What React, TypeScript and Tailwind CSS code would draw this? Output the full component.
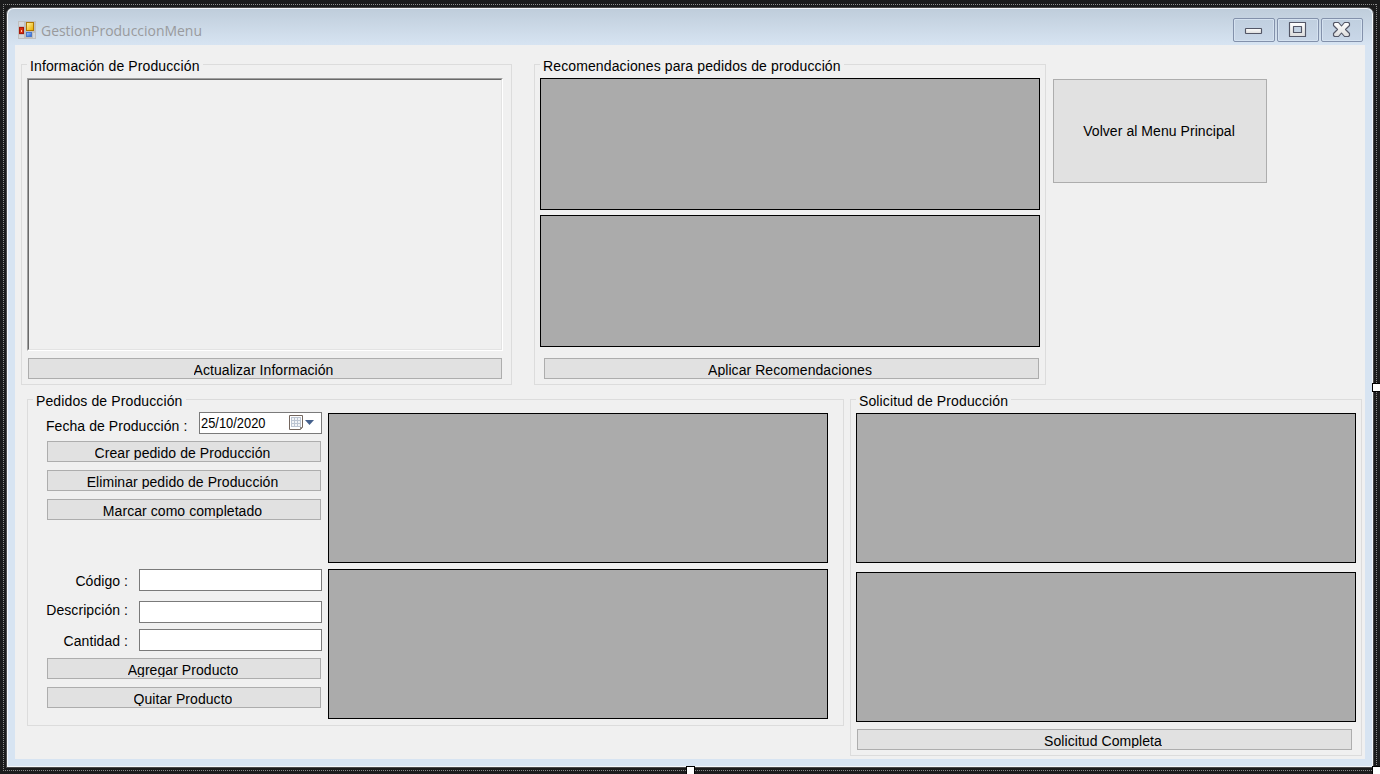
import type { ReactNode } from 'react';

function Group({ title, className, children }: { title: string; className: string; children: ReactNode }) {
  return (
    <section className={`relative shrink-0 border border-[#dcdcdc] ${className}`}>
      <h2 className="absolute -top-[9px] left-[5px] h-[20px] whitespace-nowrap bg-[#f0f0f0] pl-[3px] pr-[3px] leading-[20px] tracking-[0.12px]">{title}</h2>
      {children}
    </section>
  );
}

function Btn({ children, className }: { children: ReactNode; className: string }) {
  return (
    <button className={`flex h-[21px] shrink-0 justify-center border border-[#adadad] bg-[#e1e1e1] tracking-[0.06px] ${className}`}>
      <span className="mt-[2px] block h-[16px] overflow-hidden whitespace-nowrap leading-[18px]">{children}</span>
    </button>
  );
}

function Grid({ className }: { className: string }) {
  return <div className={`w-[500px] shrink-0 border border-black bg-[#ababab] ${className}`} />;
}

function Field({ label, className, labelClass }: { label: string; className: string; labelClass: string }) {
  return (
    <div className={`flex h-[22px] shrink-0 ${className}`}>
      <label className={`w-[82px] whitespace-nowrap text-right leading-[22px] ${labelClass}`}>{label}</label>
      <input className="ml-[11px] h-[22px] w-[183px] shrink-0 border border-[#7a7a7a] bg-white px-1 outline-none" />
    </div>
  );
}

function AppIcon() {
  return (
    <svg width="18" height="18" viewBox="0 0 18 18" className="shrink-0">
      <defs>
        <linearGradient id="gold" x2="1" y2="1"><stop stopColor="#fff0a0" /><stop offset="1" stopColor="#e8b000" /></linearGradient>
        <linearGradient id="blue" x2="1" y2="1"><stop stopColor="#9cc4ff" /><stop offset="1" stopColor="#2e68d8" /></linearGradient>
      </defs>
      <path fill="#bfbfbf" d="M0 0h18v18H0z" />
      <path fill="#d4d8dc" d="M1 1h5v4H1zM1 14h5v3H1zM15 12h2v5h-2z" />
      <path fill="#a81808" d="M1 6h5v7H1z" />
      <path fill="#d83010" d="M2 7h3v5H2z" />
      <path fill="#ffc0a0" d="M3 9h1v2H3z" />
      <path fill="#b07800" d="M8 1h8v9H8z" />
      <path fill="url(#gold)" d="M9 2h6v7H9z" />
      <path fill="#4a78c8" d="M8 11h6v5H8z" />
      <path fill="url(#blue)" d="M9 12h4v3H9z" />
    </svg>
  );
}

function Caption({ kind }: { kind: 'min' | 'max' | 'close' }) {
  return (
    <button className="flex h-[24px] w-[42px] items-center justify-center rounded-[2px] border border-[#8391ab] bg-gradient-to-b from-[#c0cfdf] to-[#c9d7e8] shadow-[inset_0_0_0_1px_#d5e2f0]">
      <svg width="22" height="22" viewBox="0 0 22 22">
        <defs>
          <linearGradient id="cap" x2="0" y2="1"><stop stopColor="#ffffff" /><stop offset="1" stopColor="#dcdcdc" /></linearGradient>
        </defs>
        <g fill="url(#cap)" stroke="#535666" strokeWidth="1.15" strokeLinejoin="round">
          {kind === 'min' && <rect x="2.5" y="9.5" width="16" height="5" rx="0.5" />}
          {kind === 'max' && <path fillRule="evenodd" d="M2.5 3.500h16v14h-16zM6.500 7.500h8v6h-8z" />}
          {kind === 'close' && <path d="M2.500 4.500l1-1h4l3 3.500 3-3.500h4l1 1v2l-4 4 4 4v2l-1 1h-4l-3-3.500-3 3.500h-4l-1-1v-2l4-4-4-4z" />}
        </g>
      </svg>
    </button>
  );
}

function CalendarIcon() {
  return (
    <svg width="28" height="18" viewBox="0 0 28 18">
      <path d="M1.500 1.500h13v12l-2 2h-11z" fill="#fff" stroke="#73665e" />
      <path d="M3 3h10v10H3z" fill="#bcc5d2" />
      <path d="M4 4h2v2H4zM7 4h2v2H7zM10 4h2v2h-2zM4 7h2v2H4zM7 7h2v2H7zM10 7h2v2h-2zM4 10h2v2H4zM7 10h2v2H7zM10 10h2v2h-2z" fill="#f1f3f6" />
      <path d="M12 16v-3h3z" fill="#8f8883" />
      <path d="M17 6h9l-4.500 5z" fill="#44608c" />
    </svg>
  );
}

export default function App() {
  return (
    <div className="relative h-[774px] w-[1380px] overflow-hidden bg-[#1b1b1c] pl-[6px] pt-[7px] text-[14px] tracking-[0.06px] text-black" style={{ fontFamily: '"Liberation Sans", Arial, sans-serif' }}>
      <svg className="absolute left-0 top-0" width="1380" height="774">
        <path d="M3 4.500h1374M3 770.500h1374M3.500 4v767M1376.500 4v767" fill="none" stroke="#8b8b8b" strokeDasharray="1 1" />
      </svg>
      <main className="relative h-[761px] w-[1368px] rounded-t-[7px] border border-[#48484a] bg-[#d7e4f2] shadow-[inset_1px_1px_0_#f4f7fa,inset_-1px_-1px_0_#f4f7fa]">
        <header className="mx-px mt-px flex h-[36px] rounded-t-[6px] bg-gradient-to-b from-[#bfcddb] to-[#d7e4f2] pl-[10px] pr-[9px] pt-[9px]">
          <div className="pt-[3px]"><AppIcon /></div>
          <h1 className="ml-[5px] mt-[2px] w-[180px] origin-left scale-x-[0.93] text-[15px] leading-[20px] tracking-normal text-[#999a9d]" style={{ fontFamily: '"Open Sans", "Noto Sans", sans-serif' }}>GestionProduccionMenu</h1>
          <div className="ml-auto flex gap-[2px]">
            <Caption kind="min" />
            <Caption kind="max" />
            <Caption kind="close" />
          </div>
        </header>
        <div className="ml-[8px] h-[714px] w-[1350px] bg-[#f0f0f0] pl-[6px] pt-[19px]">
          <div className="flex h-[335px] items-start">
            <Group title="Información de Producción" className="h-[321px] w-[491px] pl-[5px] pt-[13px]">
              <div className="h-[273px] w-[476px] border border-b-white border-l-[#a0a0a0] border-r-white border-t-[#a0a0a0]">
                <div className="h-full w-full border border-b-[#e3e3e3] border-l-[#696969] border-r-[#e3e3e3] border-t-[#696969]" />
              </div>
              <Btn className="ml-px mt-[7px] w-[474px] pr-[3px]">Actualizar Información</Btn>
            </Group>
            <Group title="Recomendaciones para pedidos de producción" className="ml-[22px] h-[321px] w-[512px] pl-[5px] pt-[13px]">
              <Grid className="h-[132px]" />
              <Grid className="mt-[5px] h-[132px]" />
              <Btn className="ml-[4px] mt-[11px] w-[495px] pr-[3px]">Aplicar Recomendaciones</Btn>
            </Group>
            <button className="ml-[7px] mt-[15px] h-[104px] w-[214px] border border-[#adadad] bg-[#e1e1e1] pr-[2px] pt-px tracking-[0.06px]">Volver al Menu Principal</button>
          </div>
          <div className="ml-[6px] flex items-start">
            <Group title="Pedidos de Producción" className="flex h-[327px] w-[817px] pt-[12px]">
              <div className="ml-[18px] w-[276px]">
                <div className="flex h-[22px]">
                  <label className="mt-[3px] w-[153px] whitespace-nowrap leading-[22px]">Fecha de Producción :</label>
                  <div className="flex h-[22px] w-[123px] justify-between border border-[#7a7a7a] bg-white pl-px pr-[5px] leading-[21px]">
                    <span className="w-[70px] origin-left scale-x-[0.92] tracking-normal">25/10/2020</span>
                    <div className="mt-px"><CalendarIcon /></div>
                  </div>
                </div>
                <Btn className="ml-px mt-[7px] w-[274px] pr-[3px]">Crear pedido de Producción</Btn>
                <Btn className="ml-px mt-[8px] w-[274px] pr-[3px]">Eliminar pedido de Producción</Btn>
                <Btn className="ml-px mt-[8px] w-[274px] pr-[3px]">Marcar como completado</Btn>
                <Field label="Código :" className="mt-[49px]" labelClass="pt-px" />
                <Field label="Descripción :" className="mt-[10px]" labelClass="-mt-[2px]" />
                <Field label="Cantidad :" className="mt-[6px]" labelClass="pt-px" />
                <Btn className="ml-px mt-[7px] w-[274px] pr-[2px]">Agregar Producto</Btn>
                <Btn className="ml-px mt-[8px] w-[274px] pr-[2px]">Quitar Producto</Btn>
              </div>
              <div className="ml-[6px] pt-px">
                <Grid className="h-[150px]" />
                <Grid className="mt-[6px] h-[150px]" />
              </div>
            </Group>
            <Group title="Solicitud de Producción" className="ml-[6px] h-[357px] w-[512px] pl-[5px] pt-[13px]">
              <Grid className="h-[150px]" />
              <Grid className="mt-[9px] h-[150px]" />
              <Btn className="ml-px mt-[7px] w-[495px] pr-[3px]">Solicitud Completa</Btn>
            </Group>
          </div>
        </div>
      </main>
      <i className="absolute left-[1372px] top-[383px] h-[9px] w-[9px] border border-black bg-white" />
      <i className="absolute left-[686px] top-[766px] h-[9px] w-[9px] border border-black bg-white" />
      <i className="absolute left-[1372px] top-[766px] h-[9px] w-[9px] border border-black bg-white" />
    </div>
  );
}
